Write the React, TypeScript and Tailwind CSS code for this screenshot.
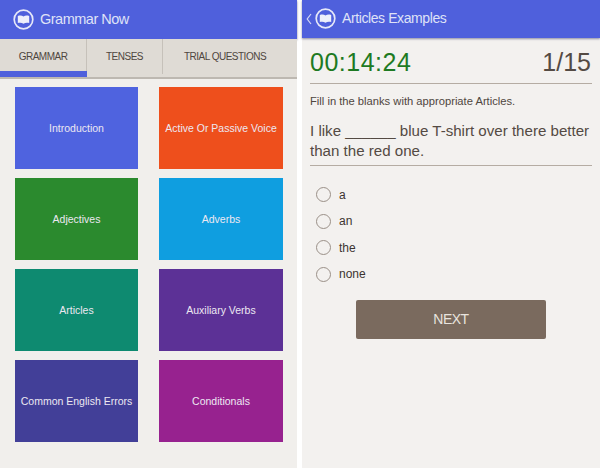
import React from 'react';

const topics = [
  { label: 'Introduction', color: 'bg-[#4f63df]' },
  { label: 'Active Or Passive Voice', color: 'bg-[#ee4f1c]' },
  { label: 'Adjectives', color: 'bg-[#2b8a2e]' },
  { label: 'Adverbs', color: 'bg-[#0f9ee0]' },
  { label: 'Articles', color: 'bg-[#0e8a70]' },
  { label: 'Auxiliary Verbs', color: 'bg-[#5c3196]' },
  { label: 'Common English Errors', color: 'bg-[#423f98]' },
  { label: 'Conditionals', color: 'bg-[#97228f]' },
];

const answers = ['a', 'an', 'the', 'none'];

function BookLogo() {
  return (
    <svg width="21" height="21" viewBox="0 0 21 21" className="shrink-0">
      <circle cx="10.5" cy="10.5" r="9.3" fill="none" stroke="#e6e8f8" strokeWidth="1.7" />
      <path
        d="M4.8 7 C7 6.2 9 6.4 10.5 7.6 C12 6.4 14 6.2 16.2 7 L16.2 14 C14 13.4 12 13.6 10.5 14.8 C9 13.6 7 13.4 4.8 14 Z"
        fill="#eef0fb"
      />
    </svg>
  );
}

function GrammarPanel() {
  return (
    <div className="flex h-full w-[297px] flex-col bg-[#f1efec]">
      <header className="flex h-[39px] items-center gap-[6px] bg-[#4f60dc] pl-[13px] shadow-[0_1px_2px_rgba(40,40,90,0.6)]">
        <BookLogo />
        <span className="text-[14.5px] tracking-[-0.5px] text-[#dfe2f7]">Grammar Now</span>
      </header>
      <nav className="relative flex h-[40px] border-b-2 border-[#bdb8b1] bg-[#dfdbd5] pb-[3px] text-[10px] tracking-[-0.5px] text-[#4f4640]">
        <div className="flex w-[87px] items-center justify-center border-r border-[#c6c1ba]">GRAMMAR</div>
        <div className="flex w-[76px] items-center justify-center border-r border-[#c6c1ba]">TENSES</div>
        <div className="flex flex-1 items-center justify-center pr-[10px]">TRIAL QUESTIONS</div>
        <div className="absolute bottom-0 left-0 h-[6px] w-[87px] bg-[#4f60dc]" />
      </nav>
      <div className="grid grid-cols-[123px_124px] grid-rows-[82px_82px_82px_82px] gap-x-[21px] gap-y-[9px] pl-[15px] pt-[8px]">
        {topics.map((topic) => (
          <div
            key={topic.label}
            className={`flex items-center justify-center pt-[2px] text-[10.5px] text-[#ece8f2] ${topic.color}`}
          >
            {topic.label}
          </div>
        ))}
      </div>
    </div>
  );
}

function QuizPanel() {
  return (
    <div className="flex h-full w-[298px] flex-col bg-[#f3f1ef]">
      <header className="flex h-[38px] items-center bg-[#4f60dc] pl-[4px] pb-[1px] shadow-[0_1px_2px_rgba(40,40,90,0.5)]">
        <svg width="6" height="12" viewBox="0 0 6 12" className="mr-[3px] shrink-0">
          <path d="M5 1 L1.2 6 L5 11" fill="none" stroke="#d5d9f5" strokeWidth="1.2" />
        </svg>
        <BookLogo />
        <span className="ml-[6px] text-[14px] tracking-[-0.4px] text-[#dfe2f7]">Articles Examples</span>
      </header>
      <div className="flex flex-col px-[8px]">
        <div className="flex h-[46px] items-center justify-between border-b border-[#b5aca3] pr-[1px] pt-[4px]">
          <span className="text-[25px] tracking-[0.5px] text-[#1e7a22]">00:14:24</span>
          <span className="text-[25px] text-[#544a43]">1/15</span>
        </div>
        <p className="mt-[10px] text-[11.2px] leading-[14px] text-[#4f4640]">
          Fill in the blanks with appropriate Articles.
        </p>
        <p className="mt-[13px] border-b border-[#b5aca3] pb-[4px] text-[15.1px] leading-[20px] text-[#544a43]">
          I like ______ blue T-shirt over there better than the red one.
        </p>
        <div className="mt-[21px] flex flex-col gap-[11.5px] pl-[6px]">
          {answers.map((answer) => (
            <div key={answer} className="flex h-[15px] items-center gap-[8px]">
              <div className="h-[15px] w-[15px] rounded-full border-[1.5px] border-[#9a9088]" />
              <span className="text-[12px] text-[#3c3430]">{answer}</span>
            </div>
          ))}
        </div>
        <div className="mt-[18px] flex justify-center">
          <button className="h-[39px] w-[190px] rounded-[2px] bg-[#7a6a5e] text-[14px] tracking-[-0.5px] text-[#e8e3de]">NEXT</button>
        </div>
      </div>
    </div>
  );
}

export default function App() {
  return (
    <div className="flex h-[468px] w-[600px] justify-between overflow-hidden bg-white font-['Liberation_Sans',sans-serif]">
      <GrammarPanel />
      <QuizPanel />
    </div>
  );
}
